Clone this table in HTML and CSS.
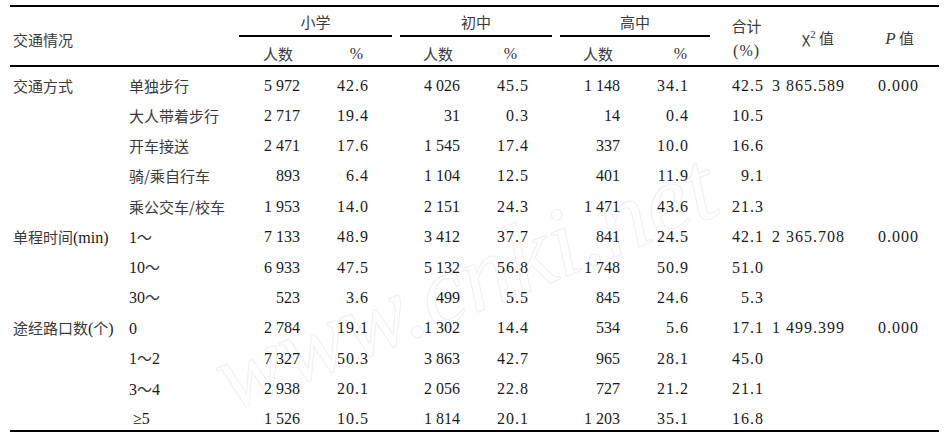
FILE: index.html
```html
<!DOCTYPE html>
<html lang="zh">
<head>
<meta charset="utf-8">
<title>交通情况</title>
<link rel="stylesheet" href="styles.css">
</head>
<body>
<div class="page">
<table class="stat">
  <colgroup>
    <col class="c1"><col class="c2"><col class="c3"><col class="c4"><col class="c5"><col class="c6"><col class="c7"><col class="c8"><col class="c9"><col class="c10"><col class="c11">
  </colgroup>
  <thead>
    <tr class="h1">
      <th rowspan="2" colspan="2" class="lab">交通情况</th>
      <th colspan="2" class="grp"><div class="grp-t">小学</div></th>
      <th colspan="2" class="grp"><div class="grp-t">初中</div></th>
      <th colspan="2" class="grp"><div class="grp-t">高中</div></th>
      <th rowspan="2" class="tot"><div>合计</div><div class="pct-h">(%)</div></th>
      <th rowspan="2" class="chi">χ<sup>2</sup> 值</th>
      <th rowspan="2" class="pv"><i>P</i> 值</th>
    </tr>
    <tr class="h2">
      <th class="n-h">人数</th><th class="p-h p1">%</th>
      <th class="n-h">人数</th><th class="p-h p2">%</th>
      <th class="n-h">人数</th><th class="p-h p3">%</th>
    </tr>
  </thead>
  <tbody>
    <tr><td class="cat">交通方式</td><td class="sub">单独步行</td><td class="n">5 972</td><td class="p p1">42.6</td><td class="n">4 026</td><td class="p p2">45.5</td><td class="n">1 148</td><td class="p p3">34.1</td><td class="t">42.5</td><td class="x">3 865.589</td><td class="v">0.000</td></tr>
    <tr><td class="cat"></td><td class="sub">大人带着步行</td><td class="n">2 717</td><td class="p p1">19.4</td><td class="n">31</td><td class="p p2">0.3</td><td class="n">14</td><td class="p p3">0.4</td><td class="t">10.5</td><td class="x"></td><td class="v"></td></tr>
    <tr><td class="cat"></td><td class="sub">开车接送</td><td class="n">2 471</td><td class="p p1">17.6</td><td class="n">1 545</td><td class="p p2">17.4</td><td class="n">337</td><td class="p p3">10.0</td><td class="t">16.6</td><td class="x"></td><td class="v"></td></tr>
    <tr><td class="cat"></td><td class="sub">骑/乘自行车</td><td class="n">893</td><td class="p p1">6.4</td><td class="n">1 104</td><td class="p p2">12.5</td><td class="n">401</td><td class="p p3">11.9</td><td class="t">9.1</td><td class="x"></td><td class="v"></td></tr>
    <tr><td class="cat"></td><td class="sub">乘公交车/校车</td><td class="n">1 953</td><td class="p p1">14.0</td><td class="n">2 151</td><td class="p p2">24.3</td><td class="n">1 471</td><td class="p p3">43.6</td><td class="t">21.3</td><td class="x"></td><td class="v"></td></tr>
    <tr><td class="cat">单程时间<span class="lat">(min)</span></td><td class="sub"><span class="lat">1</span>～</td><td class="n">7 133</td><td class="p p1">48.9</td><td class="n">3 412</td><td class="p p2">37.7</td><td class="n">841</td><td class="p p3">24.5</td><td class="t">42.1</td><td class="x">2 365.708</td><td class="v">0.000</td></tr>
    <tr><td class="cat"></td><td class="sub"><span class="lat">10</span>～</td><td class="n">6 933</td><td class="p p1">47.5</td><td class="n">5 132</td><td class="p p2">56.8</td><td class="n">1 748</td><td class="p p3">50.9</td><td class="t">51.0</td><td class="x"></td><td class="v"></td></tr>
    <tr><td class="cat"></td><td class="sub"><span class="lat">30</span>～</td><td class="n">523</td><td class="p p1">3.6</td><td class="n">499</td><td class="p p2">5.5</td><td class="n">845</td><td class="p p3">24.6</td><td class="t">5.3</td><td class="x"></td><td class="v"></td></tr>
    <tr><td class="cat">途经路口数<span class="lat">(</span>个<span class="lat">)</span></td><td class="sub"><span class="lat">0</span></td><td class="n">2 784</td><td class="p p1">19.1</td><td class="n">1 302</td><td class="p p2">14.4</td><td class="n">534</td><td class="p p3">5.6</td><td class="t">17.1</td><td class="x">1 499.399</td><td class="v">0.000</td></tr>
    <tr><td class="cat"></td><td class="sub"><span class="lat">1</span>～<span class="lat">2</span></td><td class="n">7 327</td><td class="p p1">50.3</td><td class="n">3 863</td><td class="p p2">42.7</td><td class="n">965</td><td class="p p3">28.1</td><td class="t">45.0</td><td class="x"></td><td class="v"></td></tr>
    <tr><td class="cat"></td><td class="sub"><span class="lat">3</span>～<span class="lat">4</span></td><td class="n">2 938</td><td class="p p1">20.1</td><td class="n">2 056</td><td class="p p2">22.8</td><td class="n">727</td><td class="p p3">21.2</td><td class="t">21.1</td><td class="x"></td><td class="v"></td></tr>
    <tr><td class="cat"></td><td class="sub ge"><span class="lat">≥5</span></td><td class="n">1 526</td><td class="p p1">10.5</td><td class="n">1 814</td><td class="p p2">20.1</td><td class="n">1 203</td><td class="p p3">35.1</td><td class="t">16.8</td><td class="x"></td><td class="v"></td></tr>
  </tbody>
</table>
<div class="wm" aria-hidden="true">www.cnki.net</div>
</div>
</body>
</html>
```
FILE: styles.css
```css
html, body {
  margin: 0;
  padding: 0;
  background: #ffffff;
}
body {
  width: 950px;
  height: 438px;
  overflow: hidden;
}
.page {
  position: relative;
  padding-top: 5px;
  height: 433px;
}
th, td {
  padding: 0;
  font-weight: normal;
  white-space: nowrap;
  line-height: 18px;
  vertical-align: middle;
}
.stat {
  position: relative;
  z-index: 1;
  margin-left: 10px;
  width: 929px;
  border-collapse: collapse;
  table-layout: fixed;
  font-family: "Liberation Serif", "Noto Sans CJK SC", serif;
  font-size: 16px;
  color: #1a1a1a;
}
.c1 { width: 115px; }
.c2 { width: 110px; }
.c3 { width: 81px; }
.c4 { width: 80px; }
.c5 { width: 80px; }
.c6 { width: 80px; }
.c7 { width: 80px; }
.c8 { width: 78px; }
.c9 { width: 54px; }
.c10 { width: 92px; }
.c11 { width: 79px; }

.stat thead { border-top: 2px solid #000; border-bottom: 2px solid #000; }
.stat tbody { border-bottom: 2px solid #000; }

.lab, .grp, .n-h, .tot, .chi, .pv, .cat, .sub {
  font-family: "Noto Sans CJK SC", sans-serif;
  font-size: 15px;
  color: #3a3a3a;
}
.h1 { height: 30px; }
.h2 { height: 29px; }
.lab { text-align: left; padding-left: 3px; padding-top: 7px; }
.grp { vertical-align: bottom; }
.grp-t {
  margin: 0 4px;
  border-bottom: 2px solid #000;
  padding: 6px 0 4px;
  text-align: center;
}
.n-h { text-align: right; padding-right: 23px; padding-top: 6px; }
.p-h { text-align: right; font-family: "Liberation Serif", serif; font-size: 16px; color: #333; padding-top: 6px; }
.p-h.p1 { padding-right: 33px; }
.p-h.p2 { padding-right: 39px; }
.p-h.p3 { padding-right: 27px; }
.tot { text-align: center; padding-left: 16px; padding-right: 5px; line-height: 25px; padding-top: 4px; }
.pct-h { font-family: "Liberation Serif", serif; font-size: 16px; letter-spacing: 1px; color: #333; }
.chi { text-align: center; padding-left: 8px; padding-top: 4px; }
.chi sup { font-family: "Liberation Serif", serif; font-size: 11px; vertical-align: 6px; line-height: 0; }
.pv { text-align: center; padding-top: 4px; }
.pv i { font-family: "Liberation Serif", serif; font-size: 17px; }

.stat tbody tr { height: 30.4px; }
.stat tbody td { padding-top: 8px; }
.cat, .sub { text-align: left; }
.cat { padding-left: 3px; }
.sub { padding-left: 4px; }
.sub.ge { padding-left: 8px; }
.lat { font-family: "Liberation Serif", serif; font-size: 16px; color: #1a1a1a; }
.n { text-align: right; padding-right: 16px; }
.p, .t, .x, .v { letter-spacing: 1px; }
.p { text-align: right; }
.p.p1 { padding-right: 27px; }
.p.p2 { padding-right: 27px; }
.p.p3 { padding-right: 25px; }
.t { text-align: right; padding-right: 4px; }
.x { text-align: left; padding-left: 4px; }
.v { text-align: left; padding-left: 18px; }

.wm {
  position: absolute;
  left: 200px;
  top: 335px;
  font-family: "Liberation Serif", serif;
  font-style: italic;
  font-size: 100px;
  line-height: 1;
  color: transparent;
  -webkit-text-stroke: 1px #efefef;
  transform: rotate(-22deg);
  transform-origin: left top;
  white-space: nowrap;
  z-index: 0;
}
```
